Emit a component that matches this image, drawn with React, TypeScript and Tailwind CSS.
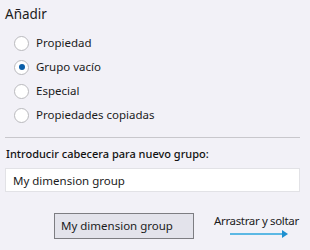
import React, { useState } from 'react';

const options = ['Propiedad', 'Grupo vacío', 'Especial', 'Propiedades copiadas'];

const Radio: React.FC<{ label: string; checked: boolean; onSelect: () => void }> = ({
    label,
    checked,
    onSelect,
}) => (
    <button type="button" onClick={onSelect} className="flex h-6 items-center gap-[7px] pl-[9px] text-left">
        <span className="flex h-[15px] w-[15px] items-center justify-center rounded-full border border-[#b9b9bd] bg-white">
            {checked && <span className="h-[6px] w-[6px] rounded-full bg-[#0a5ea8]" />}
        </span>
        <span className="text-[11.5px] text-[#1b1b1b]">{label}</span>
    </button>
);

export default function App() {
    const [selected, setSelected] = useState(1);
    const [title, setTitle] = useState('My dimension group');

    return (
        <div
            className="flex h-[250px] w-[310px] flex-col bg-[#f2f1f7] px-[5px] text-[#1b1b1b]"
            style={{ fontFamily: '"Noto Sans", "Open Sans", sans-serif' }}
        >
            <h2 className="pt-[4px] text-[13.5px] leading-[20px]">Añadir</h2>
            <div className="mt-[7px] flex flex-col">
                {options.map((o, i) => (
                    <Radio key={o} label={o} checked={selected === i} onSelect={() => setSelected(i)} />
                ))}
            </div>
            <div className="mt-[10px] h-px w-[295px] bg-[#c8c7cc]" />
            <p className="mt-[8px] pl-px text-[11px] font-medium leading-[16px] text-[#111]">
                Introducir cabecera para nuevo grupo:
            </p>
            <input
                value={title}
                onChange={(e) => setTitle(e.target.value)}
                className="mt-[6px] h-6 w-[295px] border border-[#e2e2e6] bg-white px-[7px] text-[11.5px] outline-none"
            />
            <div className="mt-[21px] flex items-start">
                <div className="ml-[49px] flex h-[26px] w-[140px] items-center border border-[#7d7d82] bg-[#e3e3eb] px-[6px] text-[11.5px]">
                    {title}
                </div>
                <div className="ml-[20px] flex flex-col">
                    <span className="whitespace-nowrap text-[11.5px] leading-[16px] tracking-[-0.35px]">
                        Arrastrar y soltar
                    </span>
                    <svg width="60" height="8" viewBox="0 0 60 8" className="ml-[16px] mt-[1px]">
                        <line x1="0" y1="4" x2="52" y2="4" stroke="#5cb8e4" strokeWidth="2" />
                        <path d="M52 0 L58 4 L52 8 Z" fill="#1e8fd0" />
                    </svg>
                </div>
            </div>
        </div>
    );
}
